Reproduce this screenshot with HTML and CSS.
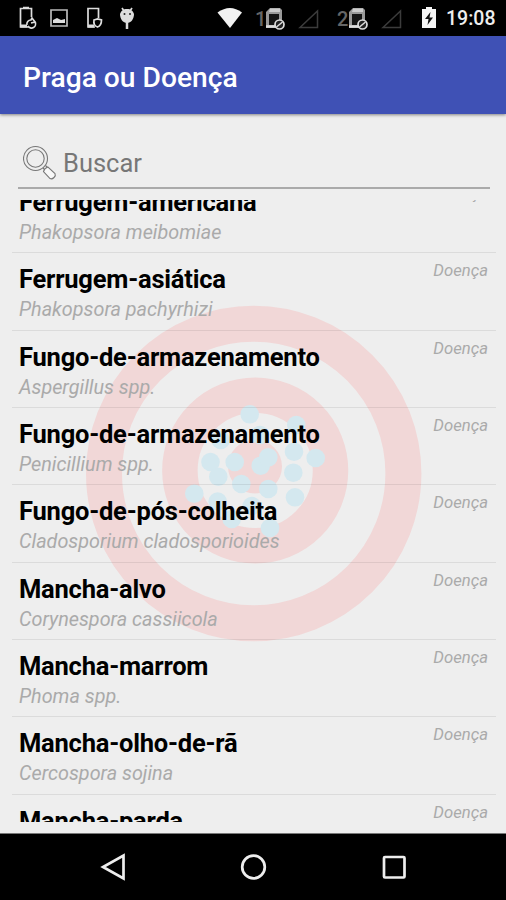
FILE: index.html
```
<!DOCTYPE html>
<html lang="pt-BR">
<head>
	<meta charset="utf-8">
	<title>Praga ou Doença</title>
	<link rel="stylesheet" href="styles.css">
</head>
<body>
<div class="status">
	<!-- notificações -->
	<svg class="icons" width="140" height="36" viewBox="0 0 140 36">
		<g fill="none" stroke="#ddd" stroke-width="1.7">
			<path d="M28 27H20.5V8.500H31.500V17M23 7.500H29"/>
			<path d="M20.500 26H27" stroke-width="3"/>
			<path d="M27 25a4 4 0 0 1 4-5l1-2 3 4-4 1M35 22a4 4 0 0 1-7 4"/>
			<path d="M51 10H67V26H51z" stroke="#bbb"/>
			<path d="M95 27H88V8.500H98.500V18"/>
			<path d="M88 26H94" stroke-width="3"/>
			<path d="M94 20l3.500-1 4 1c0 4-1 6-4 7-3-1-4-4-3.500-7z"/>
			<path d="M122 8l2 3M132 8l-2 3"/>
			<path d="M127 22V29" stroke-width="2.500"/>
		</g>
		<path d="M53 23v-3l4-2 4 2 4-1v4z" fill="#ddd"/>
		<path d="M127 9c4 0 6 2 7 5 0 5-3 9-7 9s-7-4-7-9c1-3 3-5 7-5z" fill="#ddd"/>
		<circle cx="124.500" cy="14" r="1" fill="#222"/>
		<circle cx="130" cy="14" r="1" fill="#222"/>
	</svg>
	<svg class="wifi" width="26" height="36" viewBox="0 0 26 36">
		<path d="M.5 12.500Q13 3.500 25 12.500L13 28z" fill="#f2f2f2"/>
	</svg>
	<span class="sim">1</span>
	<svg class="signal" width="55" height="36" viewBox="0 0 55 36">
		<path d="M1 28V12l4-4h10l2 2v18z" fill="#999"/>
		<path d="M4 14h10v11H4z" fill="#151515"/>
		<path d="M1 26.500H11" stroke="#ddd" stroke-width="2.500"/>
		<path d="M5 8.500H15V12H4z" fill="#ccc"/>
		<circle cx="14.500" cy="24.500" r="4.500" fill="#222" stroke="#ddd" stroke-width="1.700"/>
		<path d="M11.500 27l6-5" stroke="#ddd" stroke-width="1.500"/>
		<path d="M35 27.500L52.500 11v16.500z" fill="none" stroke="#3c3c3c" stroke-width="1.500"/>
	</svg>
	<span class="sim sim-2">2</span>
	<svg class="signal" width="55" height="36" viewBox="0 0 55 36">
		<path d="M1 28V12l4-4h10l2 2v18z" fill="#999"/>
		<path d="M4 14h10v11H4z" fill="#151515"/>
		<path d="M1 26.500H11" stroke="#ddd" stroke-width="2.500"/>
		<path d="M5 8.500H15V12H4z" fill="#ccc"/>
		<circle cx="14.500" cy="24.500" r="4.500" fill="#222" stroke="#ddd" stroke-width="1.700"/>
		<path d="M11.500 27l6-5" stroke="#ddd" stroke-width="1.500"/>
		<path d="M35 27.500L52.500 11v16.500z" fill="none" stroke="#3c3c3c" stroke-width="1.500"/>
	</svg>
	<svg class="battery" width="14" height="36" viewBox="0 0 14 36">
		<path d="M0 9h4V7h6v2h4v19H0z" fill="#f5f5f5"/>
		<path d="M8.500 12L3 19h3.500L5.500 25 11 17.500H7.500z" fill="#111"/>
	</svg>
	<span class="clock">19:08</span>
</div>
<div class="toolbar">Praga ou Doença</div>
<div class="content">
	<svg class="target" width="338" height="338" viewBox="85 305 338 338">
		<g fill="none" stroke="#f1d7d7">
			<circle cx="253.700" cy="473.500" r="149.700" stroke-width="36"/>
			<circle cx="255.200" cy="470.500" r="75.300" stroke-width="35.500"/>
		</g>
		<circle cx="255" cy="466.500" r="27" fill="#f1d7d7"/>
		<g fill="#d4e8ef">
			<circle cx="249.700" cy="414.300" r="9.300"/>
			<circle cx="296.300" cy="425" r="9.300"/>
			<circle cx="315.700" cy="458" r="9.300"/>
			<circle cx="294" cy="451.700" r="9.300"/>
			<circle cx="293.300" cy="472.700" r="9.300"/>
			<circle cx="295" cy="497.300" r="9.300"/>
			<circle cx="268.300" cy="489" r="9.300"/>
			<circle cx="241.300" cy="484" r="9.300"/>
			<circle cx="260.700" cy="465.700" r="9.300"/>
			<circle cx="268.300" cy="457.300" r="9.300"/>
			<circle cx="234.700" cy="462" r="9.300"/>
			<circle cx="210.500" cy="462" r="9.300"/>
			<circle cx="218.300" cy="476.700" r="9.300"/>
			<circle cx="220.700" cy="440" r="9.300"/>
			<circle cx="194.300" cy="493.700" r="9.300"/>
			<circle cx="217.700" cy="501.500" r="9.300"/>
			<circle cx="251.700" cy="506" r="9.300"/>
			<circle cx="231.700" cy="519" r="9.300"/>
			<circle cx="270" cy="528" r="9.300"/>
			<circle cx="260" cy="435" r="9.300"/>
		</g>
	</svg>
	<div class="search">
		<svg width="35" height="36" viewBox="0 0 35 36">
			<g fill="none" stroke="#777" stroke-width="1.100">
				<circle cx="12.500" cy="13.500" r="12"/>
				<circle cx="12.500" cy="13.500" r="8.700"/>
				<path d="M20 23l2.500 2.500M22.500 20.500l2.500 2.500"/>
				<path d="M20.500 26.500q1-3.500 4.500-4.500l7 6.500q1 2-1 4t-4 1z" fill="#f8f8f8"/>
			</g>
		</svg>
		<span>Buscar</span>
	</div>
	<div class="list">
		<div class="row"><b>Ferrugem-americana</b><i>Phakopsora meibomiae</i><em>Doença</em></div>
		<div class="row"><b>Ferrugem-asiática</b><i>Phakopsora pachyrhizi</i><em>Doença</em></div>
		<div class="row"><b>Fungo-de-armazenamento</b><i>Aspergillus spp.</i><em>Doença</em></div>
		<div class="row"><b>Fungo-de-armazenamento</b><i>Penicillium spp.</i><em>Doença</em></div>
		<div class="row"><b>Fungo-de-pós-colheita</b><i>Cladosporium cladosporioides</i><em>Doença</em></div>
		<div class="row"><b>Mancha-alvo</b><i>Corynespora cassiicola</i><em>Doença</em></div>
		<div class="row"><b>Mancha-marrom</b><i>Phoma spp.</i><em>Doença</em></div>
		<div class="row"><b>Mancha-olho-de-rã</b><i>Cercospora sojina</i><em>Doença</em></div>
		<div class="row"><b>Mancha-parda</b><i></i><em>Doença</em></div>
	</div>
</div>
<div class="nav">
	<svg width="506" height="66" viewBox="0 0 506 66">
		<g fill="none" stroke="#eee" stroke-width="2.700">
			<path d="M123.500 21.500V44.500L103 33z"/>
			<circle cx="253.500" cy="33" r="11.300"/>
			<rect x="384" y="23" width="20.500" height="20.500" rx="1"/>
		</g>
	</svg>
</div>
</body>
</html>
```
FILE: styles.css
```
* {
	margin: 0;
	padding: 0;
	box-sizing: border-box;
}
body {
	display: flex;
	flex-direction: column;
	height: 900px;
	overflow: hidden;
	font-family: Roboto, sans-serif;
	background: #eee;
}
svg {
	display: block;
	flex: none;
}
.status {
	display: flex;
	height: 36px;
	background: #000;
	color: #eee;
	line-height: 38px;
}
.wifi {
	margin-left: 77px;
}
.sim {
	width: 22px;
	padding-left: 12px;
	font-size: 20px;
	font-weight: 500;
	color: #666;
}
.sim-2 {
	width: 28px;
	padding-left: 17px;
}
.battery {
	margin-left: 19px;
}
.clock {
	margin-left: 10px;
	font-size: 19.500px;
	font-weight: 500;
}
.toolbar {
	z-index: 1;
	height: 78px;
	padding-left: 23px;
	font-size: 28.200px;
	font-weight: 500;
	line-height: 83px;
	color: #fff;
	background: #3f51b5;
	box-shadow: 0 1px 3px rgba(0, 0, 0, .45);
}
.content {
	position: relative;
	height: 719px;
	padding: 24px 10px 0 12px;
}
/* alvo ao fundo da lista */
.target {
	position: absolute;
	top: 191px;
	left: 85px;
}
.search {
	display: flex;
	align-items: center;
	gap: 5px;
	height: 51px;
	margin: 0 6px 0 6px;
	padding-left: 5px;
	border-bottom: 2px solid #aaa;
	font-size: 25.500px;
	color: #777;
}
.list {
	position: relative;
	height: 621.500px;
	margin-top: 11px;
	overflow: hidden;
}
.row {
	display: grid;
	grid-template-columns: 1fr auto;
	grid-template-rows: 33px 28px;
	height: 77.350px;
	padding: 10px 8px 0 7px;
	border-bottom: 1px solid rgba(0, 0, 0, .08);
	white-space: nowrap;
}
.row:first-child {
	margin-top: -24.100px;
}
.row b {
	font-size: 25.500px;
	font-weight: 700;
	line-height: 33px;
	letter-spacing: -.22px;
	color: #000;
}
.row i {
	grid-row: 2;
	font-size: 19.800px;
	line-height: 27px;
	color: #aaa;
}
.row em {
	grid-row: 1;
	grid-column: 2;
	font-size: 16.700px;
	line-height: 15px;
	color: #aaa;
}
.nav {
	height: 67px;
	border-top: 1px solid #777;
	background: #000;
}
```
